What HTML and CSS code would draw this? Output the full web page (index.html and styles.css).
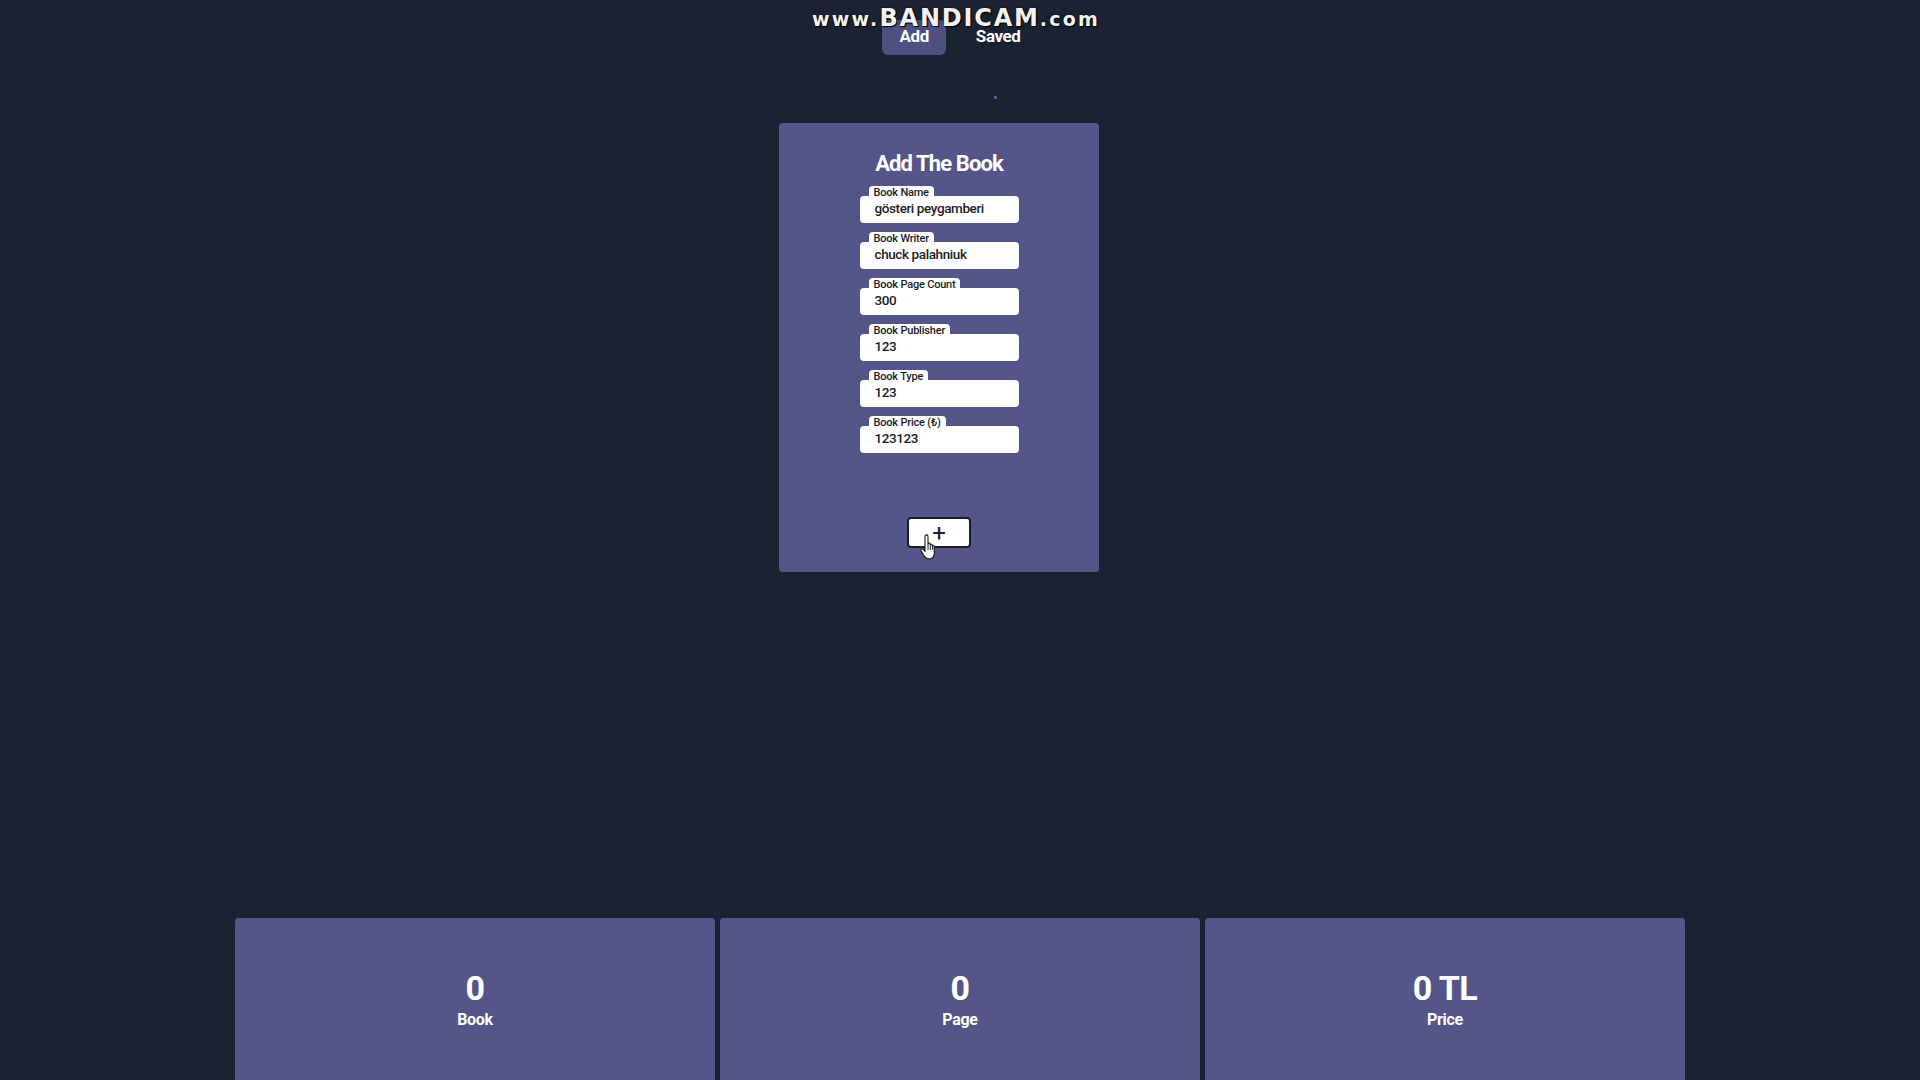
FILE: index.html
```html
<!DOCTYPE html>
<html lang="en">
<head>
<meta charset="utf-8">
<title>Book App</title>
<link rel="stylesheet" href="styles.css">
</head>
<body>
<div class="watermark">www.<span class="wm-big">BANDICAM</span>.com</div>
<nav class="nav">
  <button class="nav-btn active">Add</button>
  <button class="nav-btn">Saved</button>
</nav>
<div class="dot-row"><span class="dot"></span></div>
<main class="main">
  <section class="card">
    <h1 class="card-title">Add The Book</h1>
    <div class="fields">
      <div class="field"><span class="label">Book Name</span><div class="input">gösteri peygamberi</div></div>
      <div class="field"><span class="label">Book Writer</span><div class="input">chuck palahniuk</div></div>
      <div class="field"><span class="label">Book Page Count</span><div class="input">300</div></div>
      <div class="field"><span class="label">Book Publisher</span><div class="input">123</div></div>
      <div class="field"><span class="label">Book Type</span><div class="input">123</div></div>
      <div class="field"><span class="label">Book Price (₺)</span><div class="input">123123</div></div>
    </div>
    <div class="add-wrap">
      <button class="add-btn">+</button>
      <svg class="cursor" width="22" height="26" viewBox="0 0 22 26"><path d="M6 2.5c0-1 .7-1.6 1.5-1.6S9 1.5 9 2.5v8l.3-1.2c.6-.6 1.8-.4 2 .5v1c.5-.8 1.8-.6 2 .3v.8c.6-.7 1.8-.4 2 .5v6.5c0 2.5-1.5 4.8-3.5 5.8H8.5C6.8 24 5.5 22.5 4.5 21L2 16.5c-.5-1 .2-1.9 1.2-1.7.6.1 1.3.8 2.8 2.7V2.5z" fill="#fff" stroke="#111" stroke-width="1.1" stroke-linejoin="round"/><path d="M9 11v5M11.3 11v5M13.6 11.5v4.5" stroke="#111" stroke-width=".9"/></svg>
    </div>
  </section>
</main>
<section class="stats">
  <div class="stat"><div class="stat-value">0</div><div class="stat-label">Book</div></div>
  <div class="stat"><div class="stat-value">0</div><div class="stat-label">Page</div></div>
  <div class="stat"><div class="stat-value">0 TL</div><div class="stat-label">Price</div></div>
</section>
</body>
</html>
```
FILE: styles.css
```css
* { box-sizing: border-box; }
html, body { margin: 0; padding: 0; }
body {
  background: #1b2232;
  font-family: Roboto, "Liberation Sans", sans-serif;
  color: #fff;
  width: 1920px;
  height: 1080px;
  overflow: hidden;
}
.watermark {
  position: absolute;
  top: 4px;
  left: 812px;
  font-family: "DejaVu Sans", sans-serif;
  font-weight: bold;
  font-size: 19px;
  letter-spacing: 2.2px;
  color: #f2f2f2;
  text-shadow: 0 0 2px #000, 1px 1px 1px #000;
  z-index: 5;
}
.wm-big { font-size: 24px; letter-spacing: 1.8px; }
.nav {
  display: flex;
  justify-content: center;
  gap: 13px;
  padding-top: 20px;
}
.nav-btn {
  height: 35px;
  padding: 0 17px 3px;
  border: none;
  border-radius: 6px;
  background: transparent;
  color: #fff;
  font-family: Roboto, sans-serif;
  font-weight: 700;
  font-size: 17px;
  letter-spacing: -0.4px;
}
.nav-btn.active { background: #4f5082; }
.dot-row {
  display: flex;
  justify-content: center;
  padding-left: 70px;
  height: 68px;
  padding-top: 41px;
}
.dot { width: 3px; height: 3px; background: #5b5c90; }
.main {
  display: flex;
  justify-content: center;
  padding-right: 42px;
}
.card {
  width: 320px;
  height: 449px;
  background: #54568a;
  border-radius: 4px;
  padding-top: 28px;
  display: flex;
  flex-direction: column;
  align-items: center;
}
.card-title {
  margin: 0;
  font-size: 22px;
  line-height: 26px;
  font-weight: 700;
  letter-spacing: -0.9px;
}
.fields {
  margin-top: 9px;
  display: flex;
  flex-direction: column;
  gap: 9px;
}
.field {
  display: flex;
  flex-direction: column;
  align-items: flex-start;
  width: 159px;
}
.label {
  position: relative;
  z-index: 1;
  margin-left: 9px;
  background: #fff;
  color: #1c1d28;
  font-size: 11px;
  font-weight: 500;
  line-height: 11px;
  height: 10px;
  padding: 1px 5px 0 5px;
  border-radius: 4px 4px 0 0;
  letter-spacing: -0.2px;
  overflow: visible;
}
.input {
  width: 159px;
  height: 27px;
  background: #fff;
  border-radius: 4px;
  color: #1c1d28;
  font-size: 13.5px;
  font-weight: 500;
  line-height: 25px;
  padding-left: 15px;
  letter-spacing: -0.4px;
}
.add-wrap {
  position: relative;
  margin-top: 64px;
}
.add-btn {
  width: 64px;
  height: 31px;
  background: #fff;
  border: 2px solid #1d1d24;
  border-radius: 4px;
  font-family: Roboto, sans-serif;
  font-size: 24px;
  line-height: 24px;
  color: #1d1d24;
  padding: 0;
}
.cursor { position: absolute; left: 12px; top: 17px; }
.stats {
  position: absolute;
  top: 918px;
  left: 0;
  right: 0;
  display: flex;
  justify-content: center;
  gap: 5px;
}
.stat {
  width: 480px;
  height: 170px;
  background: #54568a;
  border-radius: 4px;
  display: flex;
  flex-direction: column;
  align-items: center;
  padding-top: 50px;
}
.stat-value {
  font-size: 34px;
  font-weight: 700;
  line-height: 40px;
  letter-spacing: -0.5px;
}
.stat-label {
  font-size: 16px;
  font-weight: 700;
  line-height: 20px;
  margin-top: 2px;
  letter-spacing: -0.3px;
}
```
